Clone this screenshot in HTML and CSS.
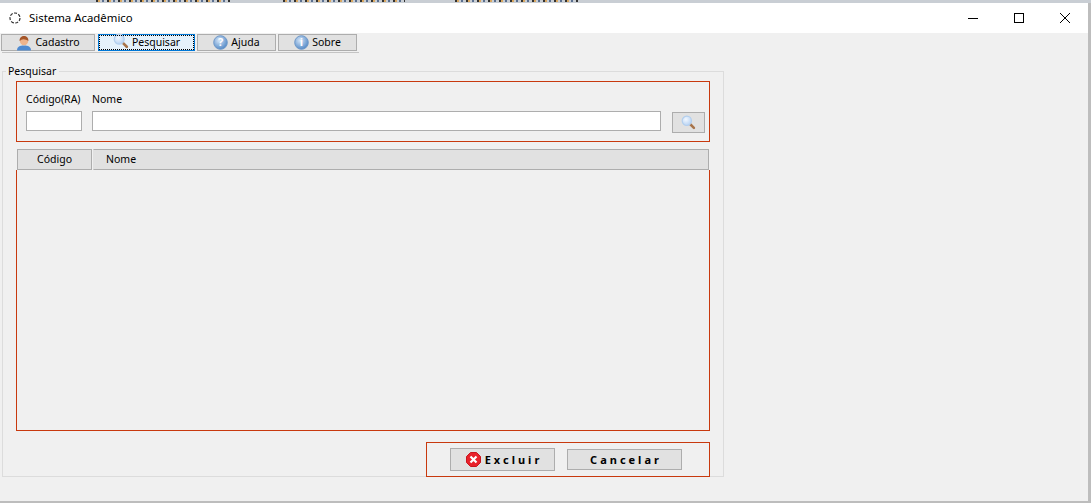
FILE: index.html
```html
<!DOCTYPE html>
<html lang="pt">
<head>
  <meta charset="UTF-8" />
  <title>Sistema Acadêmico</title>
  <link rel="stylesheet" href="styles.css">
</head>
<body>
  <svg class="defs" width="0" height="0">
    <defs>
      <radialGradient id="azul" cx="40%" cy="35%" r="70%">
        <stop offset="0" stop-color="#d6e6f8" />
        <stop offset="1" stop-color="#4d85c4" />
      </radialGradient>
      <radialGradient id="lente" cx="40%" cy="35%" r="70%">
        <stop offset="0" stop-color="#f2f8ff" />
        <stop offset="1" stop-color="#b4d0f2" />
      </radialGradient>
      <symbol id="lupa" viewBox="0 0 18 18">
        <path d="M10.500 10.500L15.500 15.500" stroke="#a8744a" stroke-width="3" stroke-linecap="round" />
        <circle cx="7" cy="7" r="5.600" fill="url(#lente)" stroke="#b3cfee" stroke-width="1.400" />
      </symbol>
    </defs>
  </svg>

  <div class="topo">
    <span class="resto resto-1"></span>
    <span class="resto resto-2"></span>
    <span class="resto resto-3"></span>
  </div>

  <div class="janela">
    <div class="titulo">
      <svg class="logo" width="14" height="14" viewBox="0 0 14 14">
        <circle cx="7" cy="7" r="5" fill="none" stroke="#333" stroke-width="1.200" stroke-dasharray="3 1.400" />
      </svg>
      <span class="titulo-texto">Sistema Acadêmico</span>
      <div class="controles">
        <svg width="12" height="12" viewBox="0 0 12 12"><path d="M1 6.500H11" stroke="#000" /></svg>
        <svg width="12" height="12" viewBox="0 0 12 12"><rect x="1.500" y="1.500" width="9" height="9" fill="none" stroke="#000" /></svg>
        <svg width="12" height="12" viewBox="0 0 12 12"><path d="M1 1L11 11M11 1L1 11" stroke="#000" /></svg>
      </div>
    </div>

    <div class="conteudo">
      <div class="abas">
        <button class="aba aba-cadastro">
          <svg width="16" height="16" viewBox="0 0 16 16">
            <path d="M1 15.500C1 11.500 4 10.500 8 10.500S15 11.500 15 15.500Z" fill="#4f8ad0" />
            <circle cx="8" cy="6" r="4.200" fill="#eeb48c" />
            <path d="M3.600 6C3.400 2.500 5.500 1 8 1s4.600 1.500 4.400 5C11 4.600 9 4.400 7.500 4.200 6 4.400 4.600 5 3.600 6Z" fill="#a5562a" />
          </svg>
          <span class="aba-texto">Cadastro</span>
        </button>
        <button class="aba aba-pesquisar">
          <svg class="lupa-aba" width="16" height="16"><use href="#lupa" /></svg>
          <span class="aba-texto">Pesquisar</span>
        </button>
        <button class="aba aba-ajuda">
          <svg width="15" height="15" viewBox="0 0 15 15">
            <circle cx="7.500" cy="7.500" r="6.800" fill="url(#azul)" stroke="#6f98c8" />
            <text x="7.500" y="11" text-anchor="middle" class="glifo">?</text>
          </svg>
          <span class="aba-texto">Ajuda</span>
        </button>
        <button class="aba aba-sobre">
          <svg width="15" height="15" viewBox="0 0 15 15">
            <circle cx="7.500" cy="7.500" r="6.800" fill="url(#azul)" stroke="#6f98c8" />
            <text x="7.500" y="11" text-anchor="middle" class="glifo">i</text>
          </svg>
          <span class="aba-texto">Sobre</span>
        </button>
      </div>

      <fieldset class="grupo">
        <legend>Pesquisar</legend>

        <div class="painel painel-busca">
          <div class="campo campo-codigo">
            <label for="codigo">Código(RA)</label>
            <input id="codigo" type="text" />
          </div>
          <div class="campo campo-nome">
            <label for="nome">Nome</label>
            <input id="nome" type="text" />
          </div>
          <button class="botao botao-busca">
            <svg width="15" height="15"><use href="#lupa" /></svg>
          </button>
        </div>

        <div class="tabela">
          <div class="cabecalho">
            <div class="col col-codigo">Código</div>
            <div class="col col-nome">Nome</div>
          </div>
          <div class="painel painel-linhas"></div>
        </div>

        <div class="rodape">
          <div class="painel painel-acoes">
            <button class="botao botao-excluir">
              <svg width="15" height="15" viewBox="0 0 15 15">
                <path d="M4.500 .5H10.500L14.500 4.500V10.500L10.500 14.500H4.500L.5 10.500V4.500Z" fill="#e8212b" stroke="#c9161d" />
                <path d="M4.500 4.500L10.500 10.500M10.500 4.500L4.500 10.500" stroke="#fff" stroke-width="2.200" />
              </svg>
              Excluir
            </button>
            <button class="botao botao-cancelar">Cancelar</button>
          </div>
        </div>
      </fieldset>
    </div>
  </div>

  <div class="base"></div>
</body>
</html>
```

FILE: styles.css
```css
* { box-sizing: border-box; }
html, body { height: 100%; }
body {
  margin: 0;
  display: flex;
  flex-direction: column;
  font-family: "Noto Sans", sans-serif;
  font-size: 10.5px;
  color: #000;
  background-color: #bdbdbd;
  overflow: hidden;
}
.defs { position: absolute; }

.topo {
  height: 3px;
  display: flex;
  background-color: #c9ced4;
}
.resto {
  height: 2px;
  background-image: repeating-linear-gradient(90deg, #333 0 2px, #d9a760 2px 4px, #c9ced4 4px 6px, #5a6f8f 6px 8px, #c9ced4 8px 11px);
}
.resto-1 { width: 134px; margin-left: 96px; }
.resto-2 { width: 122px; margin-left: 53px; }
.resto-3 { width: 123px; margin-left: 50px; }

.base { height: 2px; background-color: #bdbdbd; }
.janela {
  flex: 1;
  display: flex;
  flex-direction: column;
  margin-right: 3px;
  background-color: #f0f0f0;
}

.titulo {
  height: 30px;
  display: flex;
  align-items: center;
  padding: 0 0 1px 8px;
  background-color: #fff;
}
.logo { margin-right: 7px; }
.titulo-texto { font-size: 11.4px; }
.controles {
  margin-left: auto;
  display: flex;
  gap: 34px;
  padding-right: 17px;
}

.conteudo { flex: 1; padding: 1px 0 0 2px; }

.abas {
  display: flex;
  width: 357px;
  height: 19px;
  border-bottom: 1px solid #c4c4c4;
}
.aba {
  height: 17px;
  margin-right: 2px;
  padding: 0;
  display: flex;
  align-items: center;
  justify-content: center;
  gap: 3px;
  font-family: inherit;
  font-size: 10.5px;
  color: #000;
  background-color: #e1e1e1;
  border: 1px solid #adadad;
}
.aba-texto { margin-top: -2px; }
.aba-cadastro { width: 94px; margin-right: 3px; margin-left: -1px; }
.aba-pesquisar {
  width: 97px;
  background-color: #e5f1fb;
  border: 1px solid #0078d7;
  outline: 1px dotted #000;
  outline-offset: -2px;
}
.aba-ajuda { width: 79px; }
.aba-sobre { width: 79px; }
.lupa-aba { margin-top: -3px; }
.glifo { font-size: 11px; font-weight: bold; fill: #fff; }

.grupo {
  width: 722px;
  height: 413px;
  margin: 11px 0 0 0;
  padding: 3px 13px 0 13px;
  border: 1px solid #dcdcdc;
  min-width: 0;
}
.grupo legend { margin-left: -10px; padding: 0 3px 0 2px; font-size: 10.5px; }

.painel { border: 1px solid #c8390e; }
.painel-busca {
  height: 61px;
  display: flex;
  align-items: flex-start;
  padding: 10px 4px 0 9px;
}
.campo { display: flex; flex-direction: column; gap: 5px; }
.campo label { height: 14px; line-height: 14px; }
.campo input {
  height: 20px;
  padding: 0;
  border: 1px solid #adadad;
  background-color: #fff;
}
.campo-codigo { width: 56px; margin-right: 10px; }
.campo-codigo label { white-space: nowrap; }
.campo-nome { width: 569px; margin-right: 11px; }

.botao {
  font-family: inherit;
  color: #000;
  background-color: #e1e1e1;
  border: 1px solid #adadad;
  padding: 0;
}
.botao-busca {
  width: 33px;
  height: 21px;
  margin-top: 20px;
  display: flex;
  align-items: center;
  justify-content: center;
}

.tabela { margin-top: 7px; }
.cabecalho { display: flex; height: 21px; margin-left: 1px; width: 692px; }
.col {
  display: flex;
  align-items: center;
  padding-bottom: 2px;
  background-color: #e1e1e1;
  border: 1px solid #adadad;
  border-width: 1px 1px 1px 0;
}
.col-codigo { width: 75px; justify-content: center; border-left: 1px solid #adadad; }
.col-nome { flex: 1; padding-left: 12px; margin-left: 1px; border-left: 1px solid #e1e1e1; }
.painel-linhas { height: 261px; border-top: 0; }

.rodape { display: flex; justify-content: flex-end; margin-top: 11px; }
.painel-acoes {
  width: 284px;
  height: 35px;
  display: flex;
  align-items: center;
  padding-left: 23px;
  gap: 12px;
}
.botao-excluir, .botao-cancelar {
  font-size: 11px;
  font-weight: bold;
  letter-spacing: 3px;
  display: flex;
  align-items: center;
  justify-content: center;
  padding-left: 3px;
}
.botao-excluir { width: 105px; height: 23px; gap: 4px; }
.botao-cancelar { width: 115px; height: 21px; }
```
